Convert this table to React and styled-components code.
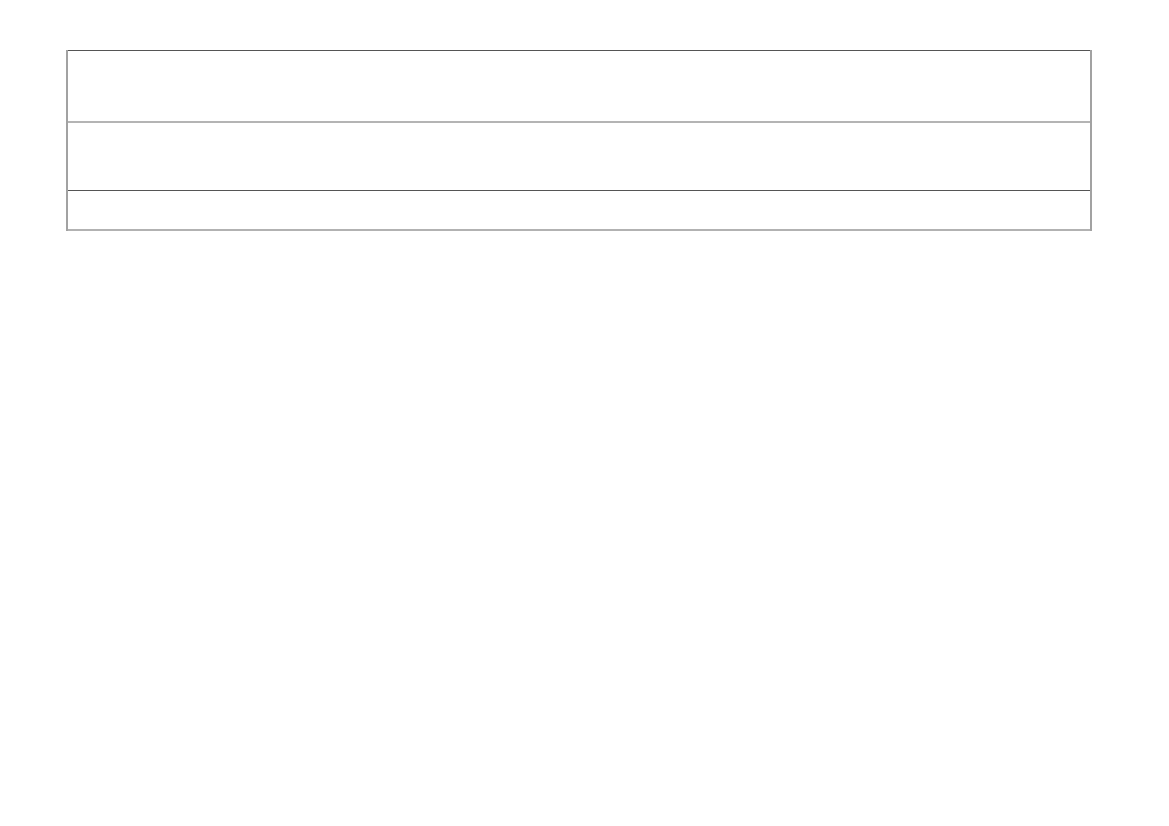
import React from "react";
import styled, { createGlobalStyle } from "styled-components";

const Global = createGlobalStyle`
  html, body { margin: 0; padding: 0; background: #fff; }
  body { font-family: "Liberation Sans", Arial, sans-serif; }
`;

const Page = styled.div`
  padding: 50px 0 0 66px;
`;

const Frame = styled.div`
  width: 1026px;
  box-sizing: border-box;
  border-left: 2px solid #a2a2a2;
  border-right: 2px solid #a2a2a2;
  display: flex;
  flex-direction: column;
`;

const Row = styled.div`
  height: ${(p) => p.$h}px;
  border-top: ${(p) => p.$topW}px solid ${(p) => p.$topC};
  border-bottom: ${(p) => (p.$last ? "2px solid #b2b2b2" : "none")};
`;

export default function App() {
  return (
    <>
      <Global />
      <Page>
        <Frame>
          <Row $h={70} $topW={1} $topC="#555" />
          <Row $h={67} $topW={2} $topC="#b4b4b4" />
          <Row $h={38} $topW={1} $topC="#555" $last />
        </Frame>
      </Page>
    </>
  );
}
